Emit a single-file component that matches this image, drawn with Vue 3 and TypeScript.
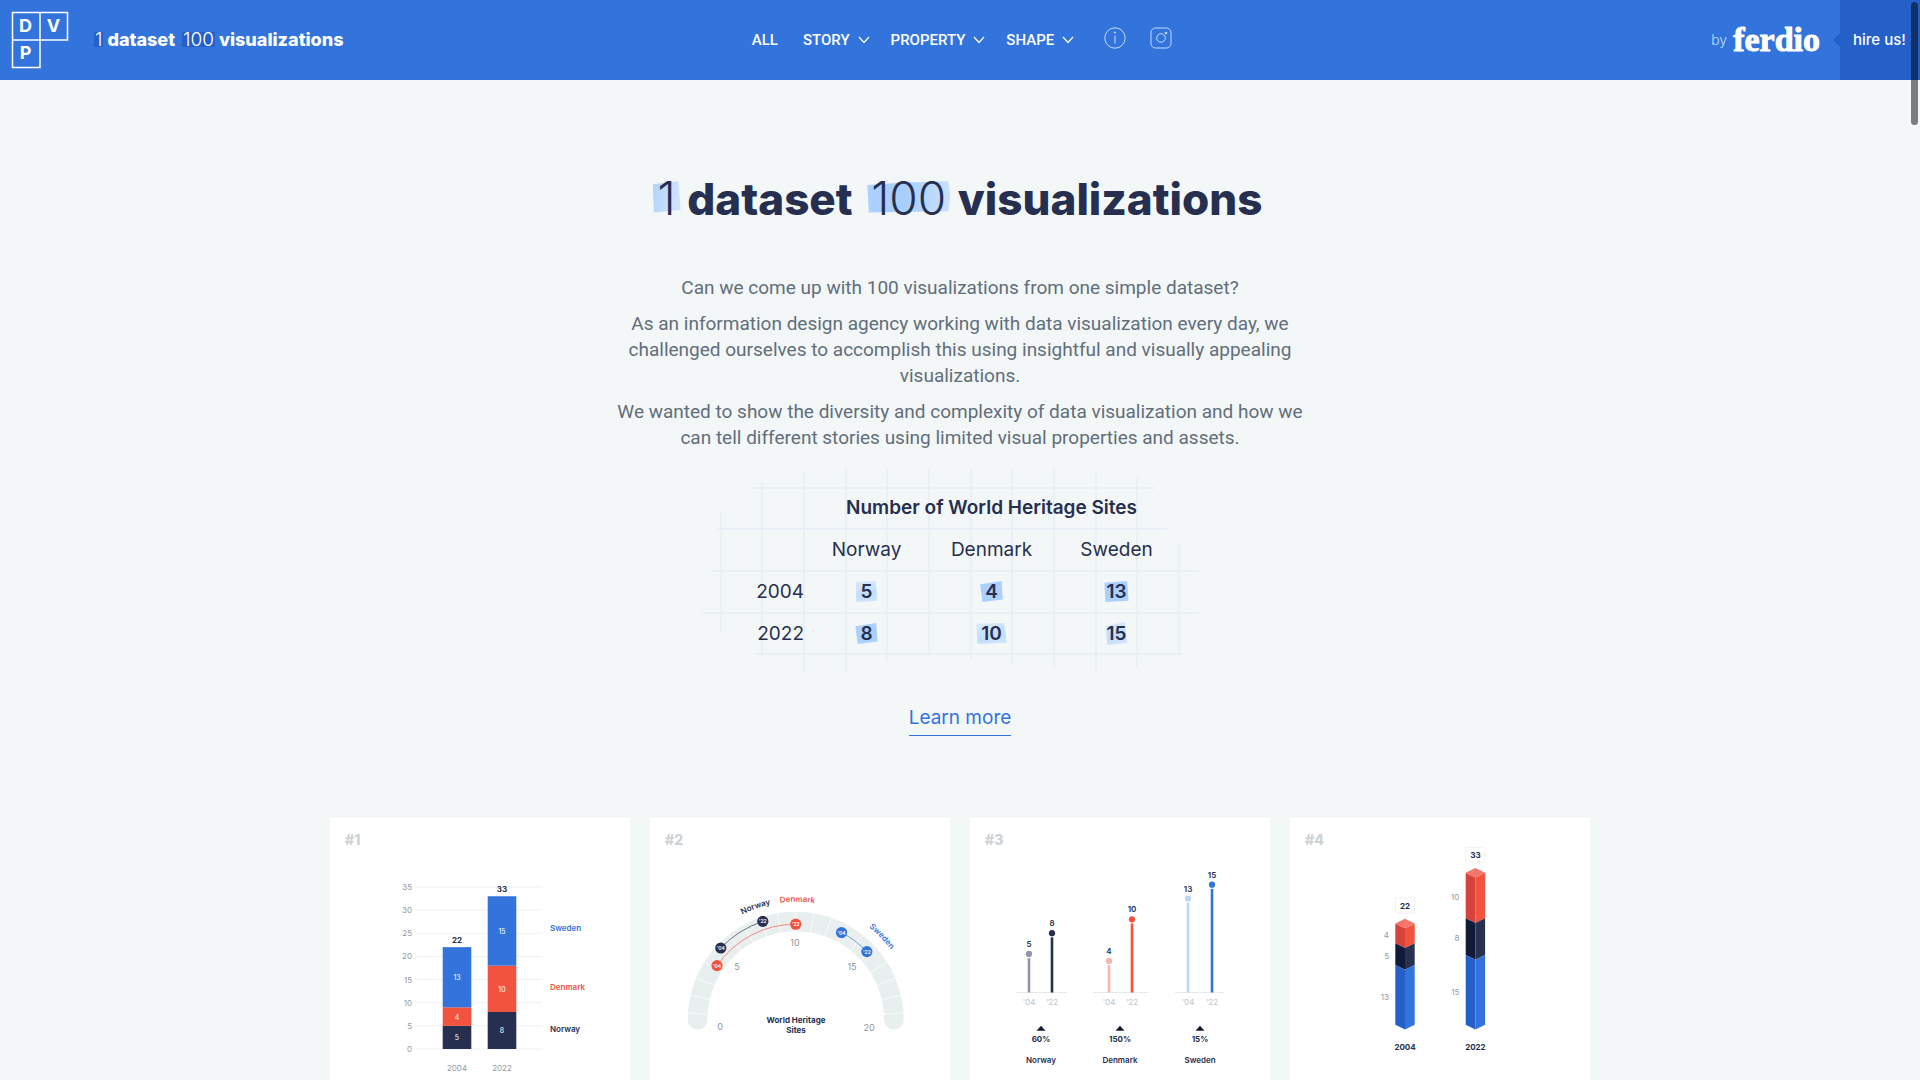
<script setup lang="ts">
interface Bar { year: string; x: number; total: number; parts: { value: number; from: number; fill: string }[] }

const navy = '#262f4f'
const red = '#f1533f'
const blue = '#3273dc'

const menus: string[] = ['STORY', 'PROPERTY', 'SHAPE']

const rows = [
  { year: '2004', cells: [{ v: 5, tone: 'pale' }, { v: 4, tone: 'strong' }, { v: 13, tone: 'strong flat' }] },
  { year: '2022', cells: [{ v: 8, tone: 'strong' }, { v: 10, tone: 'pale' }, { v: 15, tone: 'pale slant' }] },
]

const gridColumns = [
  [21, 51, 171], [62, 22, 196], [104, 11, 212], [146, 7, 212], [187, 6, 201], [229, 6, 196],
  [271, 7, 199], [312, 7, 203], [354, 7, 206], [396, 9, 209], [437, 17, 207], [479, 83, 196],
]
const gridRows = [[27, 50, 455], [68, 17, 467], [110, 11, 499], [152, 2, 499], [193, 55, 483]]

// #1 stacked bars
const unit = 162 / 35
const yOf = (v: number): number => 231 - v * unit
const ticks = [35, 30, 25, 20, 15, 10, 5, 0]
const bars: Bar[] = [
  { year: '2004', x: 127, total: 22, parts: [{ value: 5, from: 0, fill: navy }, { value: 4, from: 5, fill: red }, { value: 13, from: 9, fill: blue }] },
  { year: '2022', x: 172, total: 33, parts: [{ value: 8, from: 0, fill: navy }, { value: 10, from: 8, fill: red }, { value: 15, from: 18, fill: blue }] },
]

// #2 gauge
const cx = 145.7
const cy = 201.7
const polar = (v: number, r: number, step = 9.25): { x: number; y: number } => {
  const a = ((90 - (10 - v) * step) * Math.PI) / 180
  return { x: cx - Math.cos(a) * r, y: cy - Math.sin(a) * r }
}
const arc = (a: number, b: number, r: number): string => {
  const p = polar(a, r)
  const q = polar(b, r)
  return `M${p.x} ${p.y}A${r} ${r} 0 0 1 ${q.x} ${q.y}`
}
const spokes = Array.from({ length: 19 }, (_, i) => ({ a: polar(i + 1, 88, 9.6), b: polar(i + 1, 108, 9.6) }))
const ranges = [
  { from: 5, to: 8, r: 103.7, color: navy },
  { from: 4, to: 10, r: 95.5, color: red },
  { from: 13, to: 15, r: 98.5, color: blue },
]

// #3 lollipops
const lolly = (v: number): number => 170.6 - v * 6.93
const groups = [
  { name: 'Norway', mid: 71, pct: '60%', x1: 46, x2: 97, stems: [{ x: 59, y: '04', v: 5, c: '#9297a7' }, { x: 82, y: '22', v: 8, c: navy }] },
  { name: 'Denmark', mid: 150, pct: '150%', x1: 123, x2: 178, stems: [{ x: 139, y: '04', v: 4, c: '#f8b4ac' }, { x: 162, y: '22', v: 10, c: red }] },
  { name: 'Sweden', mid: 230, pct: '15%', x1: 205, x2: 254, stems: [{ x: 218, y: '04', v: 13, c: '#b9d5fb' }, { x: 242, y: '22', v: 15, c: blue }] },
]

// #4 prisms
const shades = [
  { left: '#d6433c', right: red },
  { left: '#101a39', right: '#283150' },
  { left: '#2560c8', right: blue },
]
const prisms = [
  { year: '2004', x: 115, total: 22, edges: [105.5, 125.3, 147, 206.7], labels: [{ v: 4, y: 120 }, { v: 5, y: 141 }, { v: 13, y: 182 }] },
  { year: '2022', x: 185.4, total: 33, edges: [54.8, 100.3, 137, 206.7], labels: [{ v: 10, y: 82 }, { v: 8, y: 123 }, { v: 15, y: 177 }] },
]
const face = (x: number, dx: number, top: number, bottom: number): string =>
  `${x + dx},${top} ${x},${top + 4.8} ${x},${bottom + 4.8} ${x + dx},${bottom}`
</script>

<template>
  <div class="page">
    <header class="bar">
      <div class="brand">
        <a href="#" class="logo" aria-label="Data viz project">
          <svg width="58" height="58" viewBox="0 0 58 58">
            <path d="M1.500 1.500H56.500V29H29V56.500H1.500ZM29 1.500V29H1.500" fill="none" stroke="#fff" stroke-width="1.500" />
            <text x="14.500" y="21">D</text>
            <text x="42.500" y="21">V</text>
            <text x="14.500" y="48">P</text>
          </svg>
        </a>
        <a href="#" class="site-name"><span class="thin">1</span> dataset <span class="thin hundred">100</span> visualizations</a>
      </div>

      <nav class="nav">
        <a href="#" class="all">ALL</a>
        <button v-for="m in menus" :key="m" type="button" class="menu">
          {{ m }}
          <svg width="12" height="8" viewBox="0 0 12 8"><path d="M1 1L6 6.500L11 1" fill="none" stroke="#fff" stroke-width="1.200" /></svg>
        </button>
        <a href="#" class="icon info" aria-label="About">
          <svg width="22" height="22" viewBox="0 0 22 22" fill="none" stroke="#c6dcfa">
            <circle cx="11" cy="11" r="10.200" />
            <path d="M11 8.500V16.500" />
            <circle cx="11" cy="5.500" r=".6" fill="#c6dcfa" />
          </svg>
        </a>
        <a href="#" class="icon insta" aria-label="Instagram">
          <svg width="22" height="22" viewBox="0 0 22 22" fill="none" stroke="#c6dcfa">
            <rect x="1" y="1" width="20" height="20" rx="4.500" />
            <circle cx="11" cy="11" r="4.300" />
            <circle cx="16" cy="6" r=".9" fill="#c6dcfa" />
          </svg>
        </a>
      </nav>

      <div class="agency">
        <a href="#" class="by">by <b>ferdio</b></a>
        <a href="#" class="hire">hire us!</a>
      </div>
    </header>

    <main>
      <section class="intro">
        <h1><span class="thin">1</span> dataset <span class="thin hundred">100</span> visualizations</h1>
        <p>Can we come up with 100 visualizations from one simple dataset?</p>
        <p>As an information design agency working with data visualization every day, we challenged ourselves to accomplish this using insightful and visually appealing visualizations.</p>
        <p>We wanted to show the diversity and complexity of data visualization and how we can tell different stories using limited visual properties and assets.</p>

        <div class="sheet">
          <svg class="grid" width="520" height="220" viewBox="0 0 520 220" stroke="#e6eff6" stroke-width="1.500" aria-hidden="true">
            <line v-for="c in gridColumns" :key="'c' + c[0]" :x1="c[0]" :x2="c[0]" :y1="c[1]" :y2="c[2]" />
            <line v-for="r in gridRows" :key="'r' + r[0]" :x1="r[1]" :x2="r[2]" :y1="r[0]" :y2="r[0]" />
          </svg>
          <table>
            <colgroup><col class="years"><col span="3" class="country"></colgroup>
            <thead>
              <tr><td></td><th colspan="3" scope="colgroup" class="heading">Number of World Heritage Sites</th></tr>
              <tr><td></td><th scope="col">Norway</th><th scope="col">Denmark</th><th scope="col">Sweden</th></tr>
            </thead>
            <tbody>
              <tr v-for="row in rows" :key="row.year">
                <th scope="row" class="year">{{ row.year }}</th>
                <td v-for="c in row.cells" :key="c.v"><span class="mark" :class="c.tone">{{ c.v }}</span></td>
              </tr>
            </tbody>
          </table>
        </div>

        <a href="#" class="more">Learn more</a>
      </section>

      <section class="cards">
        <a href="#" class="card">
          <span class="num">#1</span>
          <svg viewBox="0 0 300 300">
            <g v-for="t in ticks" :key="t">
              <line x1="87" x2="212" :y1="yOf(t)" :y2="yOf(t)" stroke="#eff1f2" />
              <text class="soft end" x="82" :y="yOf(t) + 3">{{ t }}</text>
            </g>
            <g v-for="b in bars" :key="b.year">
              <g v-for="p in b.parts" :key="p.from">
                <rect :x="b.x - 14.300" :y="yOf(p.from + p.value)" width="28.600" :height="p.value * unit" :fill="p.fill" />
                <text class="mid inner" :x="b.x" :y="yOf(p.from + p.value / 2) + 3">{{ p.value }}</text>
              </g>
              <text class="mid bold" :x="b.x" :y="yOf(b.total) - 4">{{ b.total }}</text>
              <text class="mid soft" :x="b.x" y="253">{{ b.year }}</text>
            </g>
            <text class="semi" x="220" y="113" :fill="blue">Sweden</text>
            <text class="semi" x="220" y="172" :fill="red">Denmark</text>
            <text class="semi" x="220" y="214" :fill="navy">Norway</text>
          </svg>
        </a>

        <a href="#" class="card">
          <span class="num">#2</span>
          <svg viewBox="0 0 300 300">
            <path d="M47.500 201.700A98.200 98.200 0 0 1 243.900 201.700" fill="none" stroke="#e9efef" stroke-width="19.600" stroke-linecap="round" />
            <line v-for="(s, i) in spokes" :key="i" :x1="s.a.x" :y1="s.a.y" :x2="s.b.x" :y2="s.b.y" stroke="#fff" stroke-width=".7" />
            <g v-for="r in ranges" :key="r.color">
              <path :d="arc(r.from, r.to, r.r)" fill="none" :stroke="r.color" stroke-opacity=".65" />
              <g v-for="(v, i) in [r.from, r.to]" :key="v">
                <circle :cx="polar(v, r.r).x" :cy="polar(v, r.r).y" r="5.600" :fill="r.color" />
                <text class="mid dot" :x="polar(v, r.r).x" :y="polar(v, r.r).y + 2">{{ i ? "'22" : "'04" }}</text>
              </g>
            </g>
            <path id="rim" d="M27.700 201.700A118 118 0 0 1 263.700 201.700" fill="none" />
            <text class="mid semi" :fill="navy"><textPath href="#rim" startOffset="145">Norway</textPath></text>
            <text class="mid semi" :fill="red"><textPath href="#rim" startOffset="187">Denmark</textPath></text>
            <text class="mid semi" :fill="blue"><textPath href="#rim" startOffset="280">Sweden</textPath></text>
            <g class="scale">
              <text x="70" y="212">0</text>
              <text x="87" y="152">5</text>
              <text x="145" y="128">10</text>
              <text x="202" y="152">15</text>
              <text x="219" y="213">20</text>
            </g>
            <text class="mid bold" x="146" y="205">World Heritage</text>
            <text class="mid bold" x="146" y="215">Sites</text>
          </svg>
        </a>

        <a href="#" class="card">
          <span class="num">#3</span>
          <svg viewBox="0 0 300 300">
            <g v-for="g in groups" :key="g.name">
              <line :x1="g.x1" :x2="g.x2" y1="174.500" y2="174.500" stroke="#e6eaec" />
              <g v-for="s in g.stems" :key="s.y">
                <circle :cx="s.x" :cy="lolly(s.v)" r="3.100" :fill="s.c" />
                <line :x1="s.x" :x2="s.x" :y1="lolly(s.v) + 4.200" y2="174.500" :stroke="s.c" stroke-width="2.600" />
                <text class="mid semi" :x="s.x" :y="lolly(s.v) - 7" :fill="navy">{{ s.v }}</text>
                <text class="mid faint" :x="s.x" y="187">'{{ s.y }}</text>
              </g>
              <polygon :points="`${g.mid - 4.500},212.700 ${g.mid},207.800 ${g.mid + 4.500},212.700`" fill="#101a30" />
              <text class="mid bold" :x="g.mid" y="224">{{ g.pct }}</text>
              <text class="mid semi" :x="g.mid" y="245" :fill="navy">{{ g.name }}</text>
            </g>
          </svg>
        </a>

        <a href="#" class="card">
          <span class="num">#4</span>
          <svg viewBox="0 0 300 300">
            <g v-for="p in prisms" :key="p.year">
              <template v-for="(s, i) in shades" :key="i">
                <polygon :points="face(p.x, -9.700, p.edges[i], p.edges[i + 1])" :fill="s.left" />
                <polygon :points="face(p.x, 9.700, p.edges[i], p.edges[i + 1])" :fill="s.right" />
              </template>
              <polygon :points="`${p.x - 9.700},${p.edges[0]} ${p.x},${p.edges[0] - 4.800} ${p.x + 9.700},${p.edges[0]} ${p.x},${p.edges[0] + 4.800}`" fill="#f4766a" />
              <path :d="`M${p.x - 9.500} ${p.edges[0] - 25.500}h19v15h-7.500l-2 2l-2 -2h-7.500z`" fill="#fff" stroke="#f0f2f3" />
              <text class="mid bold" :x="p.x" :y="p.edges[0] - 15">{{ p.total }}</text>
              <text v-for="l in p.labels" :key="l.v" class="soft end" :x="p.x - 16" :y="l.y">{{ l.v }}</text>
              <text class="mid bold" :x="p.x" y="232">{{ p.year }}</text>
            </g>
          </svg>
        </a>
      </section>
    </main>
    <div class="thumb" aria-hidden="true"></div>
  </div>
</template>

<style>
html, body { background: #f3f7f8; }
</style>

<style scoped>
.page {
  height: 100vh;
  overflow-y: auto;
  scrollbar-width: none;
  background: #f3f7f8;
  color: #262f4f;
  font-family: Inter, "Liberation Sans", sans-serif;
}
a { color: inherit; text-decoration: none; }

.bar {
  position: sticky;
  top: 0;
  z-index: 2;
  display: grid;
  grid-template-columns: 1fr auto 1fr;
  align-items: center;
  height: 80px;
  background: #3273dc;
  color: #fff;
}
.brand { display: flex; align-items: center; gap: 26px; padding-left: 11px; }
.logo, .logo svg { display: block; }
.logo text { font: 700 18px Inter, sans-serif; fill: #fff; text-anchor: middle; }
.site-name { font-size: 18px; font-weight: 800; line-height: 24px; white-space: nowrap; isolation: isolate; }

.thin { position: relative; font-weight: 300; }
.thin::before {
  content: "";
  position: absolute;
  z-index: -1;
  inset: 18% -1px;
  background: #2560c8;
}
.site-name .thin { margin-right: 1px; font-size: 19px; }
.site-name .hundred { margin-left: 4px; }

.nav { display: flex; align-items: center; padding-left: 4px; font: 500 15px/20px Roboto, sans-serif; }
.all { margin-right: 25px; }
.menu {
  display: flex;
  align-items: center;
  gap: 8px;
  margin: 0 21px 0 0;
  padding: 0;
  border: 0;
  background: none;
  color: inherit;
  font: inherit;
}
.icon { display: block; height: 22px; margin-bottom: 4px; }
.info { margin-left: 9px; }
.insta { margin-left: 24px; }
.icon svg { display: block; }

.agency { display: flex; align-items: center; justify-content: flex-end; height: 100%; }
.by { display: flex; align-items: center; gap: 6px; margin-right: 20px; font: 300 14px/20px Inter, sans-serif; color: #c6dcfa; }
.by b { font: 700 34px/40px "Liberation Serif", serif; color: #fff; -webkit-text-stroke: 1px #fff; }
.hire {
  position: relative;
  display: flex;
  align-items: center;
  height: 100%;
  box-sizing: border-box;
  width: 80px;
  padding-left: 13px;
  background: #2560c8;
  font: 500 15px/20px Inter, sans-serif;
  white-space: nowrap;
}
.hire::before {
  content: "";
  position: absolute;
  left: -7px;
  top: 33px;
  border: solid transparent;
  border-width: 7px 7px 7px 0;
  border-right-color: #2560c8;
}

.intro { display: flex; flex-direction: column; align-items: center; padding-top: 87px; text-align: center; isolation: isolate; }
h1 { margin: 0 0 45px; font-size: 44px; line-height: 62px; font-weight: 800; white-space: nowrap; }
h1 .thin { margin-right: 2px; font-size: 46px; }
h1 .hundred { margin-left: 9px; }
h1 .thin::before {
  inset: 20% -5px 24%;
  background: linear-gradient(100deg, #b3d4fd, #c6dffc 60%, #d3e6fc);
  clip-path: polygon(0 10%, 92% 0, 100% 92%, 60% 95%, 5% 100%);
}
h1 .hundred::before {
  inset: 20% -4px 24%;
  background: linear-gradient(90deg, #add1ff, #a8cefe 45%, #c9e0fc);
  clip-path: polygon(0 12%, 40% 5%, 98% 0, 100% 50%, 98% 96%, 2% 100%, 1% 50%);
}
p { max-width: 692px; margin: 0 0 10px; color: #616e7b; font: 19px/26px Roboto, sans-serif; }

.sheet { position: relative; box-sizing: border-box; width: 520px; height: 220px; padding: 26px 0 0 21px; }
.grid { position: absolute; inset: 0; z-index: -1; }
table { border-collapse: collapse; table-layout: fixed; width: 458px; font: 19px/24px Inter, sans-serif; }
tr { height: 42px; }
td, th { padding: 0; font-weight: 400; text-align: center; white-space: nowrap; }
.years { width: 83px; }
.country { width: 125px; }
.year { text-align: right; }
.heading { font-weight: 600; }
.mark { position: relative; font-weight: 600; }
.mark::before {
  content: "";
  position: absolute;
  z-index: -1;
  inset: 1px -5px;
  background: #acd0fe;
  clip-path: polygon(0 16%, 94% 0, 100% 88%, 10% 100%);
}
.mark.pale::before { background: linear-gradient(165deg, #dcebfb, #c2dcfc 60%, #d4e6fb); clip-path: polygon(0 4%, 92% 0, 100% 94%, 4% 100%); }
.mark.flat::before { inset: 1px -2px; clip-path: polygon(0 8%, 94% 0, 100% 94%, 4% 100%); }
.mark.slant::before { inset: 0 -1px; clip-path: polygon(0 18%, 88% 0, 98% 90%, 8% 100%); }

.more { margin-top: 24px; padding-bottom: 4px; border-bottom: 1px solid #3273dc; color: #3273dc; font: 19px/26px Inter, sans-serif; }

.cards { display: grid; grid-template-columns: repeat(4, 1fr); gap: 20px; max-width: 1260px; margin: 82px auto 40px; }
.card { display: grid; background: #fff; }
.card > * { grid-area: 1 / 1; }
.card svg { display: block; width: 100%; font: 8px Inter, sans-serif; }
.num { padding: 13px 15px; color: #ced2d5; font: 800 14px/18px Inter, sans-serif; }
.mid { text-anchor: middle; }
.end { text-anchor: end; }
.bold { font-weight: 700; fill: #262f4f; }
.semi { font-weight: 600; }
.soft { fill: #9299a2; }
.faint { fill: #bcc4ca; }
.inner { font-size: 7px; fill: #fff; }
.dot { font-size: 5px; font-weight: 600; fill: #fff; }
.scale { font-size: 9px; fill: #8c959f; text-anchor: middle; }

.thumb { position: fixed; z-index: 3; top: 2px; right: 2px; width: 7px; height: 123px; border-radius: 4px; background: rgba(0, 0, 0, 0.5); }
</style>
